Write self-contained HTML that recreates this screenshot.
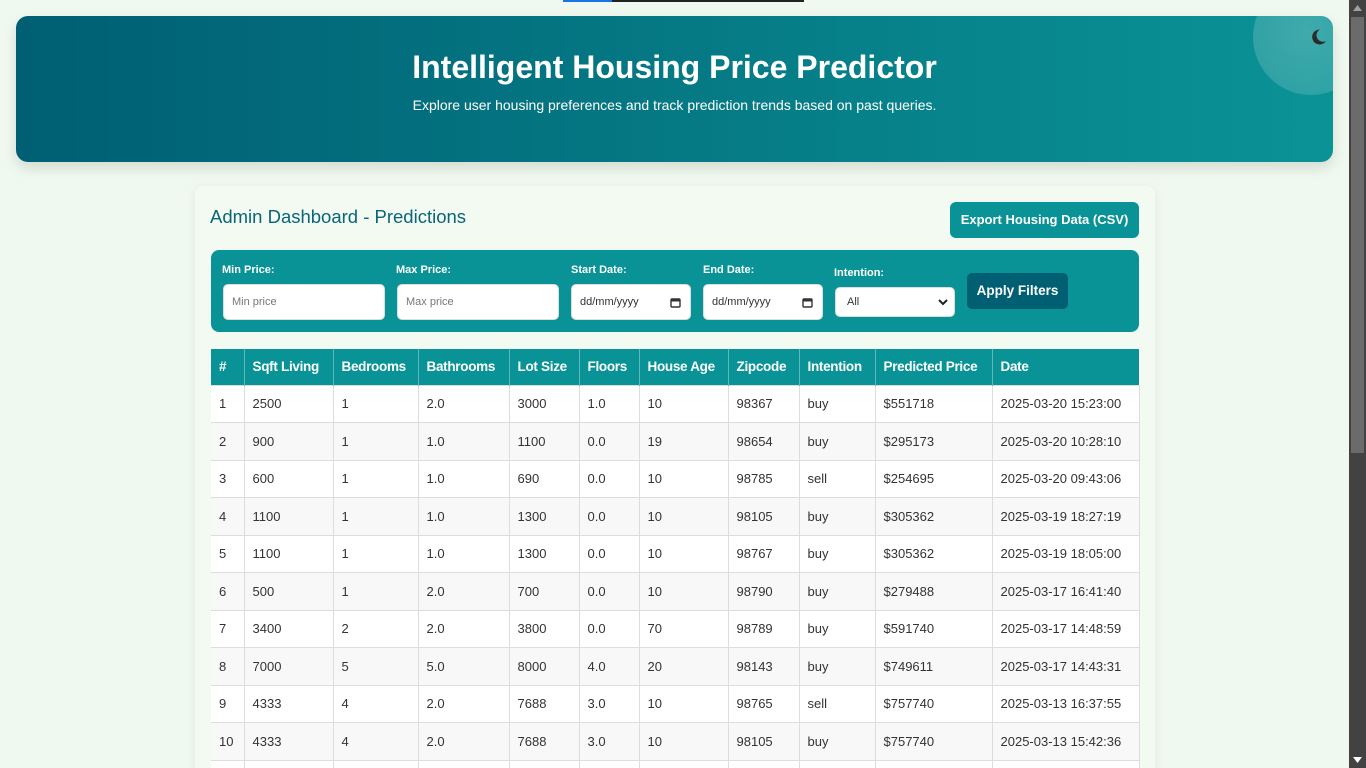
<!DOCTYPE html>
<html><head><meta charset="utf-8"><style>
*{box-sizing:border-box;margin:0;padding:0}
html,body{width:1366px;height:768px;overflow:hidden}
body{background:#f0f9ef;font-family:"Liberation Sans",Arial,sans-serif;position:relative;color:#333}
.topbar{position:absolute;top:0;left:563px;width:241px;height:2px;background:#222}
.topbar i{position:absolute;left:0;top:0;width:49px;height:2px;background:#1a73e8}
.hero{position:absolute;left:16px;top:16px;width:1317px;height:146px;border-radius:12px;overflow:hidden;
background:linear-gradient(90deg,#005f73,#0a9396);box-shadow:0 6px 14px rgba(0,0,0,.12);color:#fff;text-align:center}
.hero .c{position:absolute;left:1237px;top:-37px;width:116px;height:116px;border-radius:50%;
background:radial-gradient(circle at 45% 45%,rgba(255,255,255,.22),rgba(255,255,255,.12))}
.hero h1{position:absolute;top:33px;left:0;width:100%;font-size:32px;font-weight:bold}
.hero p{position:absolute;top:81px;left:0;width:100%;font-size:14px}
.moon{position:absolute;left:1293px;top:12px;width:18px;height:18px}
.card{position:absolute;left:195px;top:186px;width:960px;height:600px;background:#f2faf2;border-radius:8px;box-shadow:0 2px 10px rgba(0,0,0,.07)}
.title{position:absolute;left:210px;top:206px;font-size:18.5px;color:#0a6577}
.export{position:absolute;left:950px;top:202px;width:189px;height:36px;background:#0a9396;color:#fff;border-radius:6px;font-size:13px;font-weight:bold;text-align:center;line-height:36px}
.filters{position:absolute;left:211px;top:250px;width:928px;height:82px;background:#0a9396;border-radius:8px}
.lab{position:absolute;color:#fff;font-size:11px;font-weight:bold}
.inp{position:absolute;background:#fff;border-radius:5px;border:1px solid #ddd;font-size:11px;color:#333;padding-left:8px;display:flex;align-items:center}
.ph{color:#777}
.apply{position:absolute;left:967px;top:273px;width:101px;height:36px;background:#005f73;border-radius:5px;color:#fff;font-weight:bold;font-size:13.5px;text-align:center;line-height:35px}
table{position:absolute;left:211px;top:349px;width:928px;border-collapse:collapse;font-size:13px;background:#fff;table-layout:fixed}
th,td{white-space:nowrap;overflow:hidden}
th{background:#0a9396;color:#fff;text-align:left;height:36px;padding:0 8px;font-weight:bold;border-left:1px solid #5fb9ba;font-size:13.5px;letter-spacing:-.3px}
th:first-child,td:first-child{border-left:none}
td{height:37.5px;padding:0 8px;border:1px solid #ddd;color:#333}
tr:nth-child(odd) td{background:#f8f8f8}
.sb{position:absolute;left:1349px;top:0;width:17px;height:768px;background:#424242}
.thumb{position:absolute;left:1351px;top:17px;width:13px;height:436px;background:#6b6b6b}
</style></head><body>
<div class="topbar"><i></i></div>
<div class="hero"><div class="c"></div>
<svg class="moon" viewBox="0 0 18 18"><path d="M11 1.5A7.5 7.5 0 1 0 17 13 6 6 0 0 1 11 1.5Z" fill="#2b2b2b"/></svg>
<h1>Intelligent Housing Price Predictor</h1>
<p>Explore user housing preferences and track prediction trends based on past queries.</p></div>
<div class="card"></div>
<div class="title">Admin Dashboard - Predictions</div>
<div class="export">Export Housing Data (CSV)</div>
<div class="filters"></div>
<div class="lab" style="left:222px;top:264px">Min Price:</div>
<div class="lab" style="left:396px;top:264px">Max Price:</div>
<div class="lab" style="left:571px;top:264px">Start Date:</div>
<div class="lab" style="left:703px;top:264px">End Date:</div>
<div class="lab" style="left:834px;top:267px">Intention:</div>
<div class="inp" style="left:223px;top:284px;width:162px;height:36px"><span class="ph">Min price</span></div>
<div class="inp" style="left:397px;top:284px;width:162px;height:36px"><span class="ph">Max price</span></div>
<div class="inp" style="left:571px;top:284px;width:120px;height:36px">dd/mm/yyyy<svg style="position:absolute;right:9px;top:12px" width="11" height="11" viewBox="0 0 11 11"><rect x="1" y="2" width="9" height="8" rx="1" fill="none" stroke="#333" stroke-width="1.4"/><rect x="1" y="2" width="9" height="2.5" fill="#333"/></svg></div>
<div class="inp" style="left:703px;top:284px;width:120px;height:36px">dd/mm/yyyy<svg style="position:absolute;right:9px;top:12px" width="11" height="11" viewBox="0 0 11 11"><rect x="1" y="2" width="9" height="8" rx="1" fill="none" stroke="#333" stroke-width="1.4"/><rect x="1" y="2" width="9" height="2.5" fill="#333"/></svg></div>
<div class="inp" style="left:835px;top:287px;width:120px;height:30px;padding-left:11px">All<svg style="position:absolute;right:6px;top:10px" width="10" height="8" viewBox="0 0 10 8"><path d="M1 2l4 4 4-4" fill="none" stroke="#222" stroke-width="2"/></svg></div>
<div class="apply">Apply Filters</div>
<table>
<colgroup><col style="width:33px"><col style="width:89px"><col style="width:85px"><col style="width:91px"><col style="width:70px"><col style="width:60px"><col style="width:89px"><col style="width:71px"><col style="width:76px"><col style="width:117px"><col style="width:147px"></colgroup>
<tr><th>#</th><th>Sqft Living</th><th>Bedrooms</th><th>Bathrooms</th><th>Lot Size</th><th>Floors</th><th>House Age</th><th>Zipcode</th><th>Intention</th><th>Predicted Price</th><th>Date</th></tr>
<tr><td>1</td><td>2500</td><td>1</td><td>2.0</td><td>3000</td><td>1.0</td><td>10</td><td>98367</td><td>buy</td><td>$551718</td><td>2025-03-20 15:23:00</td></tr>
<tr><td>2</td><td>900</td><td>1</td><td>1.0</td><td>1100</td><td>0.0</td><td>19</td><td>98654</td><td>buy</td><td>$295173</td><td>2025-03-20 10:28:10</td></tr>
<tr><td>3</td><td>600</td><td>1</td><td>1.0</td><td>690</td><td>0.0</td><td>10</td><td>98785</td><td>sell</td><td>$254695</td><td>2025-03-20 09:43:06</td></tr>
<tr><td>4</td><td>1100</td><td>1</td><td>1.0</td><td>1300</td><td>0.0</td><td>10</td><td>98105</td><td>buy</td><td>$305362</td><td>2025-03-19 18:27:19</td></tr>
<tr><td>5</td><td>1100</td><td>1</td><td>1.0</td><td>1300</td><td>0.0</td><td>10</td><td>98767</td><td>buy</td><td>$305362</td><td>2025-03-19 18:05:00</td></tr>
<tr><td>6</td><td>500</td><td>1</td><td>2.0</td><td>700</td><td>0.0</td><td>10</td><td>98790</td><td>buy</td><td>$279488</td><td>2025-03-17 16:41:40</td></tr>
<tr><td>7</td><td>3400</td><td>2</td><td>2.0</td><td>3800</td><td>0.0</td><td>70</td><td>98789</td><td>buy</td><td>$591740</td><td>2025-03-17 14:48:59</td></tr>
<tr><td>8</td><td>7000</td><td>5</td><td>5.0</td><td>8000</td><td>4.0</td><td>20</td><td>98143</td><td>buy</td><td>$749611</td><td>2025-03-17 14:43:31</td></tr>
<tr><td>9</td><td>4333</td><td>4</td><td>2.0</td><td>7688</td><td>3.0</td><td>10</td><td>98765</td><td>sell</td><td>$757740</td><td>2025-03-13 16:37:55</td></tr>
<tr><td>10</td><td>4333</td><td>4</td><td>2.0</td><td>7688</td><td>3.0</td><td>10</td><td>98105</td><td>buy</td><td>$757740</td><td>2025-03-13 15:42:36</td></tr>
<tr><td>&nbsp;</td><td></td><td></td><td></td><td></td><td></td><td></td><td></td><td></td><td></td><td></td></tr>
</table>
<div class="sb"></div><div class="thumb"></div>
<svg style="position:absolute;left:1353px;top:5px" width="9" height="6"><path d="M0 6L4.5 0 9 6Z" fill="#a0a0a0"/></svg>
<svg style="position:absolute;left:1353px;top:757px" width="9" height="6"><path d="M0 0L4.5 6 9 0Z" fill="#fff"/></svg>
</body></html>
